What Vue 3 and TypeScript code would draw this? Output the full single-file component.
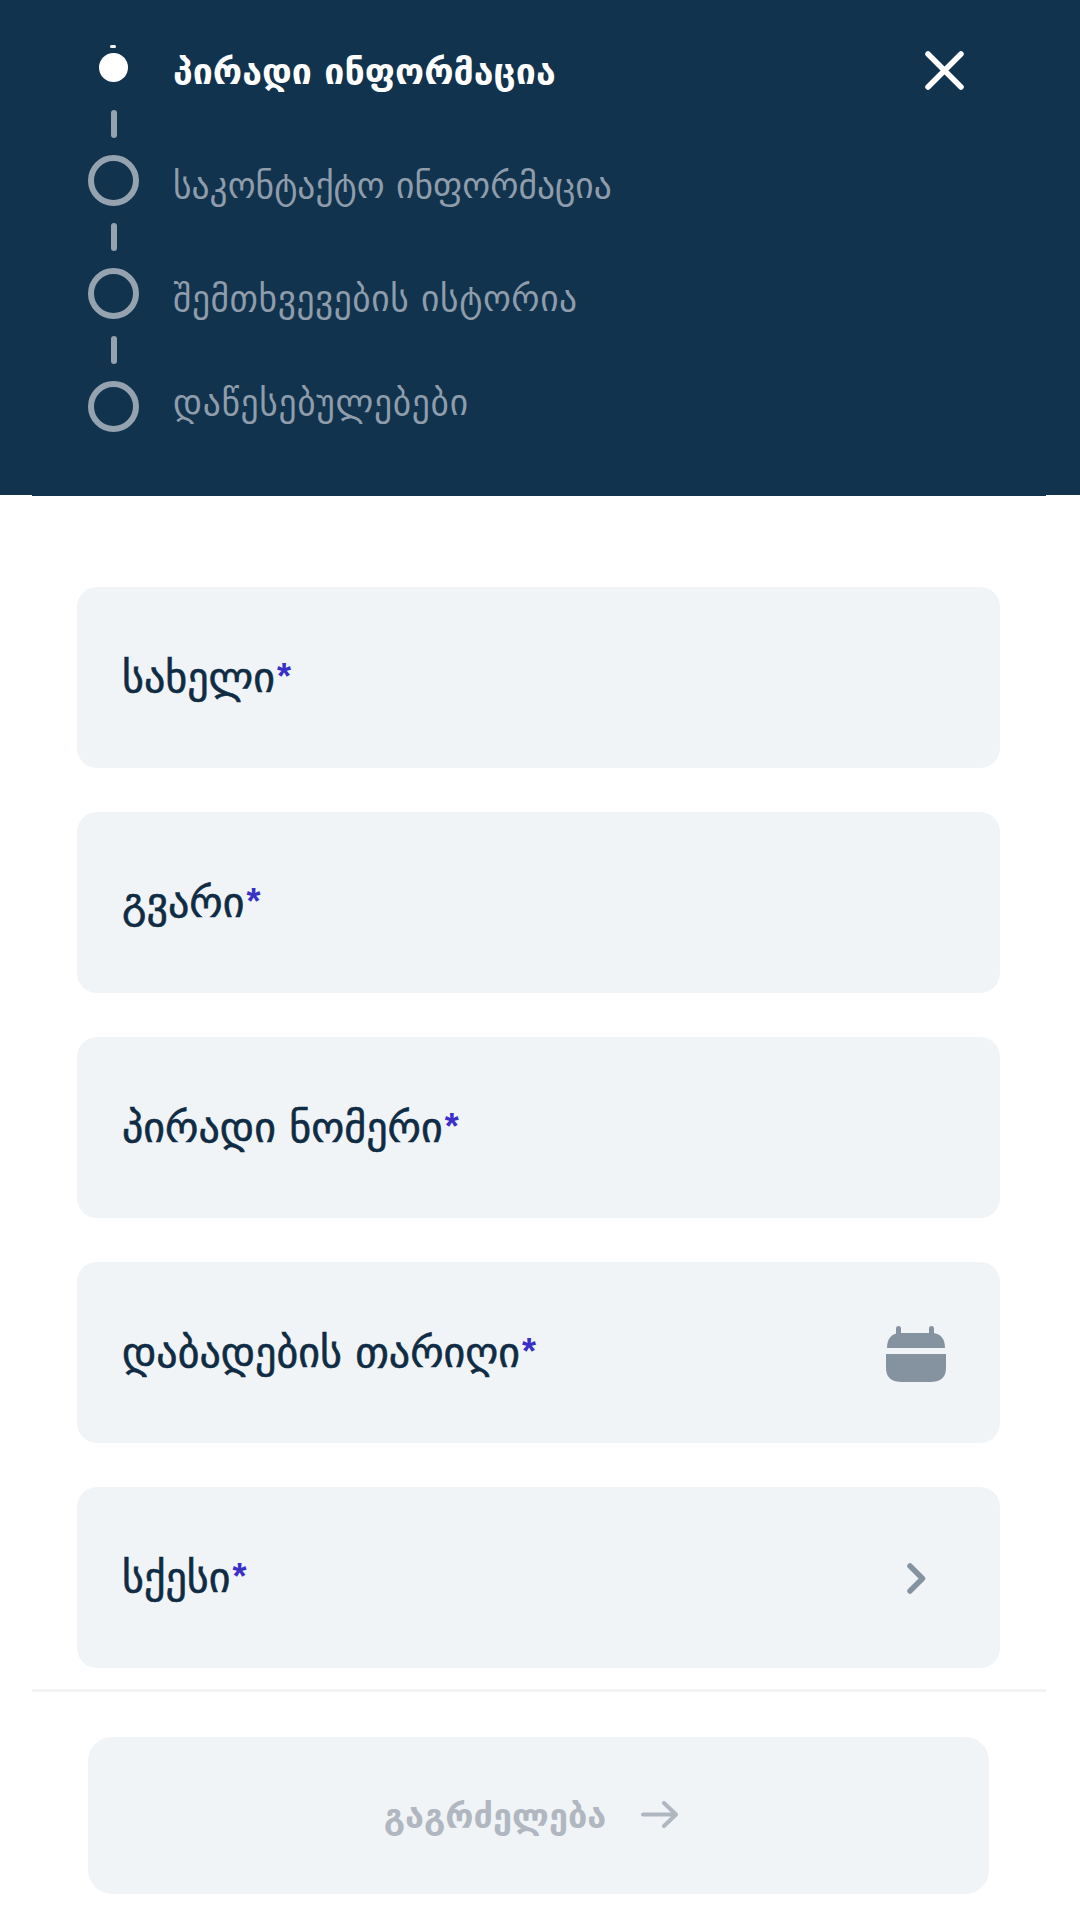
<template>
  <div class="screen">
    <header class="top">
      <ol class="steps">
        <li v-for="(step, index) in steps" :key="step" class="step" :class="{ active: index === 0 }">
          <div class="rail">
            <span class="node"><span class="dot"></span></span>
            <span v-if="index < steps.length - 1" class="dash"></span>
          </div>
          <span class="step-label">{{ step }}</span>
        </li>
      </ol>
      <button class="close" type="button" aria-label="close">
        <svg width="39" height="39" viewBox="0 0 39 39" fill="none">
          <path d="M3 3 36 36M36 3 3 36" stroke="#fff" stroke-width="5.500" stroke-linecap="round" />
        </svg>
      </button>
    </header>
    <div class="rule dark"></div>

    <main class="form">
      <div v-for="field in fields" :key="field.label" class="field">
        <span class="field-label">{{ field.label }}<em>*</em></span>
        <svg v-if="field.icon === 'calendar'" class="cal" width="60" height="56" viewBox="0 0 60 56" fill="#8593a1">
          <rect x="10" y="0" width="5" height="12" rx="2.500" />
          <rect x="43" y="0" width="5" height="12" rx="2.500" />
          <path d="M1 22C1 13 5 7 15 7H45C55 7 59 13 59 22Z" />
          <path d="M0 28H60V42C60 52 54 56 44 56H16C6 56 0 52 0 42Z" />
        </svg>
        <svg v-else-if="field.icon === 'chevron'" class="chev" width="19" height="31" viewBox="0 0 19 31" fill="none">
          <path d="M3 3 15.500 15.500 3 28" stroke="#8593a1" stroke-width="5.500" stroke-linecap="round" stroke-linejoin="round" />
        </svg>
      </div>
    </main>

    <div class="rule light"></div>

    <footer class="foot">
      <button class="next" type="button">
        <span>გაგრძელება</span>
        <svg width="37" height="27" viewBox="0 0 37 27" fill="none">
          <path d="M2 13.500H35M23 2 35 13.500 23 25" stroke="#b0b7c0" stroke-width="4" stroke-linecap="round" stroke-linejoin="round" />
        </svg>
      </button>
    </footer>
  </div>
</template>

<script setup lang="ts">
type Field = { label: string; icon?: 'calendar' | 'chevron' }

const steps: string[] = [
  'პირადი ინფორმაცია',
  'საკონტაქტო ინფორმაცია',
  'შემთხვევების ისტორია',
  'დაწესებულებები',
]

const fields: Field[] = [
  { label: 'სახელი' },
  { label: 'გვარი' },
  { label: 'პირადი ნომერი' },
  { label: 'დაბადების თარიღი', icon: 'calendar' },
  { label: 'სქესი', icon: 'chevron' },
]
</script>

<style>
html,
body {
  background: #fff;
}
</style>

<style scoped>
.screen {
  width: 1080px;
  height: 1920px;
  overflow: hidden;
  background: #fff;
  font-family: "DejaVu Sans", "Noto Sans", sans-serif;
}

.top {
  height: 495px;
  box-sizing: border-box;
  background: #12334d;
  padding: 42px 116px 0 88px;
  display: flex;
  justify-content: space-between;
  align-items: flex-start;
}

.steps {
  list-style: none;
  margin: 0;
  padding: 0;
}

.step {
  display: flex;
  height: 113px;
  gap: 34px;
}

.rail {
  width: 51px;
  display: flex;
  flex-direction: column;
  align-items: center;
  gap: 17px;
}

.node {
  width: 51px;
  height: 51px;
  flex: none;
  display: flex;
  align-items: center;
  justify-content: center;
}

.dot {
  position: relative;
  width: 51px;
  height: 51px;
  box-sizing: border-box;
  border: 6px solid #95a2b0;
  border-radius: 50%;
}

.dash {
  width: 6px;
  height: 28px;
  border-radius: 3px;
  background: #95a2b0;
  flex: none;
}

.step-label {
  margin-top: 6px;
  font-size: 35.500px;
  line-height: 50px;
  color: #8e9cab;
  white-space: nowrap;
}

.step:nth-child(3) .step-label {
  letter-spacing: 0.55px;
}

.step:last-child .step-label {
  margin-top: -3px;
  letter-spacing: 0.7px;
}

.active .dot {
  width: 29px;
  height: 29px;
  border: 0;
  background: #fff;
}

/* little tick just above the current step's dot */
.active .dot::before {
  content: "";
  position: absolute;
  top: -8px;
  left: 11px;
  width: 6px;
  height: 3px;
  border-radius: 2px;
  background: #fff;
}

.active .step-label {
  margin-top: 5px;
  font-size: 35.700px;
  color: #fff;
  font-weight: 700;
}

.close {
  border: 0;
  padding: 0;
  background: none;
  display: block;
  margin-top: 9px;
}

.close svg {
  display: block;
}

.rule {
  height: 1px;
  margin: 0 34px 0 32px;
}

.rule.dark {
  background: #12334d;
}

.rule.light {
  height: 3px;
  background: #f2f3f5;
}

.form {
  padding: 91px 80px 0 77px;
  display: flex;
  flex-direction: column;
  gap: 44px;
  margin-bottom: 21px;
}

.field {
  height: 181px;
  box-sizing: border-box;
  padding: 0 54px 0 45px;
  border-radius: 20px;
  background: #f1f4f7;
  display: flex;
  align-items: center;
  justify-content: space-between;
}

.field-label {
  font-size: 42px;
  line-height: 60px;
  color: #0f2c44;
  -webkit-text-stroke: 0.6px #0f2c44;
}

.field-label em {
  font-family: "Liberation Sans", sans-serif;
  font-style: normal;
  font-weight: 700;
  font-size: 36px;
  margin-left: 2px;
  vertical-align: 3px;
  color: #3a30c8;
  -webkit-text-stroke: 0;
}

.cal {
  margin-top: 3px;
}

.chev {
  margin: 2px 20px 0 0;
}

.foot {
  padding: 45px 91px 0 88px;
}

.next {
  width: 100%;
  height: 157px;
  border: 0;
  border-radius: 24px;
  background: #f1f4f7;
  padding: 0 15px 0 0;
  display: flex;
  align-items: center;
  justify-content: center;
  gap: 35px;
  font-family: inherit;
  font-size: 34.300px;
  font-weight: 700;
  color: #b0b7c0;
}

.next svg {
  margin-bottom: 2px;
}
</style>
